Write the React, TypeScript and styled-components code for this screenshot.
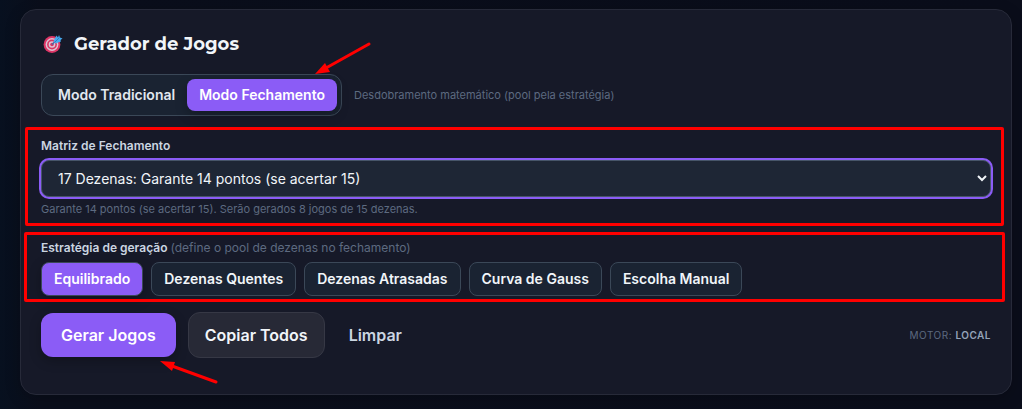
import React, { useState } from "react";
import styled, { createGlobalStyle, css } from "styled-components";

const GlobalStyle = createGlobalStyle`
  *, *::before, *::after { box-sizing: border-box; }
  body {
    margin: 0;
    min-height: 100vh;
    background: linear-gradient(90deg, #07101f 0, #0a0e1b 40px, #0a0d1a 100%);
    color: #e2e8f0;
    font-family: Inter, "Liberation Sans", sans-serif;
  }
  button, select { font-family: inherit; }
`;

const Page = styled.main`
  padding: 9px 10px 14px 20px;
`;

const Card = styled.section`
  padding: 20px 20px 36px;
  border: 1px solid #272a39;
  border-radius: 16px;
  background: #161928;
  box-shadow: 0 4px 16px rgba(0, 0, 0, 0.2);
`;

const Header = styled.header`
  display: flex;
  align-items: center;
  gap: 11px;
  padding-left: 2px;
  margin-bottom: 16px;
`;

const Title = styled.h2`
  margin: 0;
  font-family: Montserrat, Inter, "Liberation Sans", sans-serif;
  font-size: 18px;
  line-height: 28px;
  font-weight: 700;
  color: #f1f5f9;
`;

const ModeRow = styled.div`
  display: flex;
  align-items: center;
  gap: 12px;
  margin-bottom: 22px;
`;

const Segmented = styled.div`
  position: relative;
  display: flex;
  padding: 4px;
  border: 1px solid #3b4858;
  border-radius: 12px;
  background: #1a2332;
`;

const purple = css`
  background: #8b5cf6;
  color: #ffffff;
  box-shadow: 0 4px 12px rgba(0, 0, 0, 0.25);
`;

const ModeButton = styled.button<{ $active: boolean }>`
  height: 32px;
  padding: 0 12px;
  border: 0;
  border-radius: 8px;
  background: transparent;
  color: #e2e8f0;
  font-size: 14px;
  line-height: 20px;
  font-weight: 600;
  ${(p) => p.$active && purple}
`;

const Hint = styled.p`
  margin: 0;
  font-size: 11px;
  line-height: 16px;
  color: #5d6a80;
`;

const Highlight = styled.div`
  position: relative;
  margin-bottom: 23px;

  &::after {
    content: "";
    position: absolute;
    inset: -11px -13px -9px -16px;
    border: 3px solid #ff0000;
    border-radius: 2px;
    pointer-events: none;
  }
`;

const StrategyGroup = styled(Highlight)`
  margin-bottom: 16px;

  &::after {
    inset: -8px -14px -6px -17px;
  }
`;

const Label = styled.label`
  display: block;
  margin-bottom: 6px;
  font-size: 12px;
  line-height: 16px;
  font-weight: 600;
  color: #cbd5e1;
`;

const GroupLabel = styled(Label).attrs({ as: "div" })`
  span {
    font-weight: 400;
    color: #5d6a80;
  }
`;

const Select = styled.select`
  display: block;
  width: 100%;
  height: 37px;
  margin-bottom: 4px;
  padding: 0 12px;
  border: 1px solid #475569;
  border-radius: 8px;
  outline: 0;
  background: #1e2635;
  color: #f1f5f9;
  font-size: 14px;
  box-shadow: 0 0 0 2px #8b5cf6;
`;

const Chips = styled.div`
  display: flex;
  flex-wrap: wrap;
  gap: 8px;
`;

const Chip = styled.button<{ $active: boolean }>`
  height: 34px;
  padding: 0 12px;
  border: 1px solid #3b4858;
  border-radius: 8px;
  background: #1a2332;
  color: #f1f5f9;
  font-size: 14px;
  line-height: 20px;
  font-weight: 600;
  ${(p) => p.$active && purple}
`;

const Actions = styled.div`
  display: flex;
  align-items: center;
  gap: 12px;
`;

const ActionButton = styled.button<{ $kind: "primary" | "secondary" | "ghost" }>`
  position: relative;
  height: 44px;
  padding: 0 20px;
  border: 0;
  border-radius: 12px;
  background: transparent;
  color: #cbd5e1;
  font-size: 16px;
  line-height: 24px;
  font-weight: 600;
  ${(p) => p.$kind === "primary" && purple}
  ${(p) =>
    p.$kind === "secondary" &&
    css`
      height: 46px;
      padding: 0 16px;
      border: 1px solid #363845;
      background: #272936;
      color: #f1f5f9;
    `}
  ${(p) =>
    p.$kind === "ghost" &&
    css`
      padding: 0 12px;
    `}
`;

const Engine = styled.span`
  margin-left: auto;
  font-size: 10px;
  line-height: 16px;
  letter-spacing: 0.05em;
  text-transform: uppercase;
  color: #5d6a80;

  strong {
    font-weight: 600;
    color: #94a3b8;
  }
`;

const Arrow = styled.svg<{ $corner: "top" | "bottom" }>`
  position: absolute;
  overflow: visible;
  pointer-events: none;
  ${(p) =>
    p.$corner === "top"
      ? css`
          right: -30px;
          top: -33px;
        `
      : css`
          right: -43px;
          top: 48px;
        `}
`;

const TargetIcon = () => (
  <svg width="20" height="20" viewBox="0 0 20 20" aria-hidden="true">
    <circle cx="9" cy="10.5" r="8.4" fill="#dd3566" />
    <circle cx="9" cy="10.5" r="6.4" fill="#ddc3d4" />
    <circle cx="9" cy="10.5" r="4.9" fill="#d83562" />
    <circle cx="9" cy="10.5" r="3.3" fill="#ddc3d4" />
    <circle cx="9" cy="10.5" r="1.8" fill="#d83562" />
    <path d="M9 10.5 L14 5.5" stroke="#3b6fae" strokeWidth="1.4" />
    <path d="M10.5 7 L13.5 1.5 L15 3.5 L16 1 L17 3.5 L19.5 4.5 L17.5 6 L18 7.5 L12.5 9.5 Z" fill="#45a9ee" />
    <path d="M12 8 L16.5 3.5" stroke="#2377b8" strokeWidth="0.8" />
  </svg>
);

const strategies = [
  "Equilibrado",
  "Dezenas Quentes",
  "Dezenas Atrasadas",
  "Curva de Gauss",
  "Escolha Manual",
];

export default function App() {
  const [mode, setMode] = useState("Modo Fechamento");
  const [strategy, setStrategy] = useState(strategies[0]);

  return (
    <>
      <GlobalStyle />
      <Page>
        <Card>
          <Header>
            <TargetIcon />
            <Title>Gerador de Jogos</Title>
          </Header>

          <ModeRow>
            <Segmented>
              {["Modo Tradicional", "Modo Fechamento"].map((m) => (
                <ModeButton
                  key={m}
                  type="button"
                  $active={m === mode}
                  aria-pressed={m === mode}
                  onClick={() => setMode(m)}
                >
                  {m}
                </ModeButton>
              ))}
              <Arrow $corner="top" width="56" height="34" viewBox="0 0 56 34" aria-hidden="true">
                <path d="M11 26 L54 2" stroke="#ff0000" strokeWidth="3" strokeLinecap="round" />
                <path d="M0 32 L10 21 L15 30 Z" fill="#ff0000" />
              </Arrow>
            </Segmented>
            <Hint>Desdobramento matemático (pool pela estratégia)</Hint>
          </ModeRow>

          <Highlight>
            <Label htmlFor="matriz">Matriz de Fechamento</Label>
            <Select id="matriz" defaultValue="17">
              <option value="17">17 Dezenas: Garante 14 pontos (se acertar 15)</option>
            </Select>
            <Hint>Garante 14 pontos (se acertar 15). Serão gerados 8 jogos de 15 dezenas.</Hint>
          </Highlight>

          <StrategyGroup role="group" aria-labelledby="estrategia">
            <GroupLabel id="estrategia">
              Estratégia de geração <span>(define o pool de dezenas no fechamento)</span>
            </GroupLabel>
            <Chips>
              {strategies.map((s) => (
                <Chip
                  key={s}
                  type="button"
                  $active={s === strategy}
                  aria-pressed={s === strategy}
                  onClick={() => setStrategy(s)}
                >
                  {s}
                </Chip>
              ))}
            </Chips>
          </StrategyGroup>

          <Actions>
            <ActionButton type="button" $kind="primary">
              Gerar Jogos
              <Arrow $corner="bottom" width="59" height="24" viewBox="0 0 59 24" aria-hidden="true">
                <path d="M12 5 L56 21" stroke="#ff0000" strokeWidth="3" strokeLinecap="round" />
                <path d="M0 0 L15 1 L12 10 Z" fill="#ff0000" />
              </Arrow>
            </ActionButton>
            <ActionButton type="button" $kind="secondary">
              Copiar Todos
            </ActionButton>
            <ActionButton type="button" $kind="ghost">
              Limpar
            </ActionButton>
            <Engine>
              Motor: <strong>Local</strong>
            </Engine>
          </Actions>
        </Card>
      </Page>
    </>
  );
}
